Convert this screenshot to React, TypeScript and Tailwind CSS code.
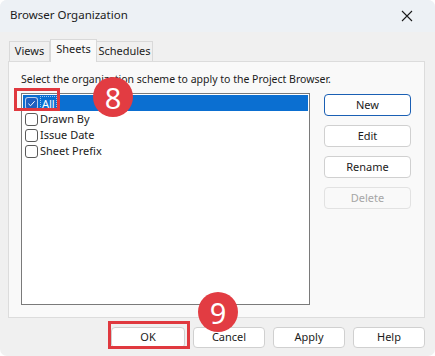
import React from 'react';

const font = { fontFamily: '"Noto Sans", "Open Sans", Arial, sans-serif' };

function Check({ checked }: { checked?: boolean }) {
    if (checked) {
        return (
            <span className="w-[13px] h-[13px] rounded-[3px] bg-[#1f5fbf] border border-white/70 flex items-center justify-center">
                <svg width="9" height="9" viewBox="0 0 10 10">
                    <path d="M1.5 5.2 L4 7.5 L8.5 2.5" fill="none" stroke="#ffffff" strokeWidth="1.1" />
                </svg>
            </span>
        );
    }
    return <span className="w-[13px] h-[13px] rounded-[3px] border border-[#5a5a5a] bg-white" />;
}

function SideButton({ label, primary, disabled }: { label: string; primary?: boolean; disabled?: boolean }) {
    return (
        <div
            className={
                'h-[22px] w-[87px] rounded-[4px] border flex items-center justify-center text-[11px] ' +
                (primary
                    ? 'border-[#1a5fb4] bg-white text-[#1b1b1b] '
                    : disabled
                      ? 'border-[#e2e2e2] bg-[#f9f9f9] text-[#a6a6a6] '
                      : 'border-[#d0d0d0] bg-white text-[#1b1b1b] ')
            }
        >
            {label}
        </div>
    );
}

function BottomButton({ label, w }: { label: string; w: string }) {
    return (
        <div className={'h-[21px] rounded-[4px] border border-[#d0d0d0] bg-white flex items-center justify-center text-[11px] text-[#1b1b1b] ' + w}>
            {label}
        </div>
    );
}

function Badge({ n }: { n: string }) {
    return (
        <div className="w-[40px] h-[40px] rounded-full bg-[#e23c42] text-white flex items-center justify-center text-[29px] leading-none">
            {n}
        </div>
    );
}

export default function App() {
    const rows = ['Drawn By', 'Issue Date', 'Sheet Prefix'];
    return (
        <div className="w-[435px] h-[356px] bg-white" style={font}>
            <div className="relative w-[435px] h-[356px] bg-[#f0f0f0] rounded-[7px] overflow-hidden flex flex-col">
                {/* title bar */}
                <div className="h-[32px] shrink-0 bg-[#edf1f5] flex items-center justify-between pl-[10px] pr-[22px]">
                    <span className="text-[11.5px] text-[#1b1b1b] mt-[-2px]">Browser Organization</span>
                    <svg width="12" height="12" viewBox="0 0 12 12">
                        <path d="M1 1 L11 11 M11 1 L1 11" stroke="#1b1b1b" strokeWidth="1.1" />
                    </svg>
                </div>

                {/* tabs */}
                <div className="flex items-end pl-[9px] h-[28px] shrink-0 mt-[1px]">
                    <div className="h-[20px] w-[41px] justify-center border border-b-0 border-[#d9d9d9] bg-[#f0f0f0] text-[11px] text-[#1b1b1b] flex items-center">Views</div>
                    <div className="h-[23px] w-[47px] justify-center border border-b-0 border-[#d9d9d9] bg-[#f9f9f9] text-[11px] text-[#1b1b1b] flex items-center -mb-px relative z-10 pb-[3px]">Sheets</div>
                    <div className="h-[20px] w-[56px] justify-center border border-b-0 border-l-0 border-[#d9d9d9] bg-[#f0f0f0] text-[11px] text-[#1b1b1b] flex items-center">Schedules</div>
                </div>

                {/* panel */}
                <div className="ml-[8px] mr-[10px] h-[257px] shrink-0 border border-[#dcdcdc] bg-[#f9f9f9] pl-[12px] pr-[13px] pt-[9px] flex flex-col">
                    <div className="text-[10.5px] text-[#1b1b1b] leading-[16px]">Select the organization scheme to apply to the Project Browser.</div>
                    <div className="flex mt-[6px] gap-[14px]">
                        <div className="w-[290px] h-[212px] border border-[#7a7a7a] bg-white p-px">
                            <div className="h-[16px] bg-[#0b6fd1] flex items-center gap-[2px] pl-[2px] text-[11px] text-white">
                                <Check checked />
                                <span className="border border-dotted border-white/60 px-px leading-[13px]">All</span>
                            </div>
                            {rows.map((r) => (
                                <div key={r} className="h-[16px] flex items-center gap-[2px] pl-[2px] text-[11px] text-[#1b1b1b]">
                                    <Check />
                                    <span>{r}</span>
                                </div>
                            ))}
                        </div>
                        <div className="flex flex-col gap-[9px] pt-[1px]">
                            <SideButton label="New" primary />
                            <SideButton label="Edit" />
                            <SideButton label="Rename" />
                            <SideButton label="Delete" disabled />
                        </div>
                    </div>
                </div>

                {/* bottom buttons */}
                <div className="flex pl-[111px] mt-[9px] gap-[8px]">
                    <BottomButton label="OK" w="w-[74px]" />
                    <BottomButton label="Cancel" w="w-[72px]" />
                    <BottomButton label="Apply" w="w-[72px]" />
                    <BottomButton label="Help" w="w-[72px]" />
                </div>

                {/* annotations */}
                <div className="absolute left-[14px] top-[88px] w-[46px] h-[23px] border-[3px] border-[#e0393f]" />
                <div className="absolute left-[93px] top-[77px]">
                    <Badge n="8" />
                </div>
                <div className="absolute left-[108px] top-[321px] w-[82px] h-[28px] border-[3px] border-[#e0393f]" />
                <div className="absolute left-[198px] top-[292px]">
                    <Badge n="9" />
                </div>
            </div>
        </div>
    );
}
